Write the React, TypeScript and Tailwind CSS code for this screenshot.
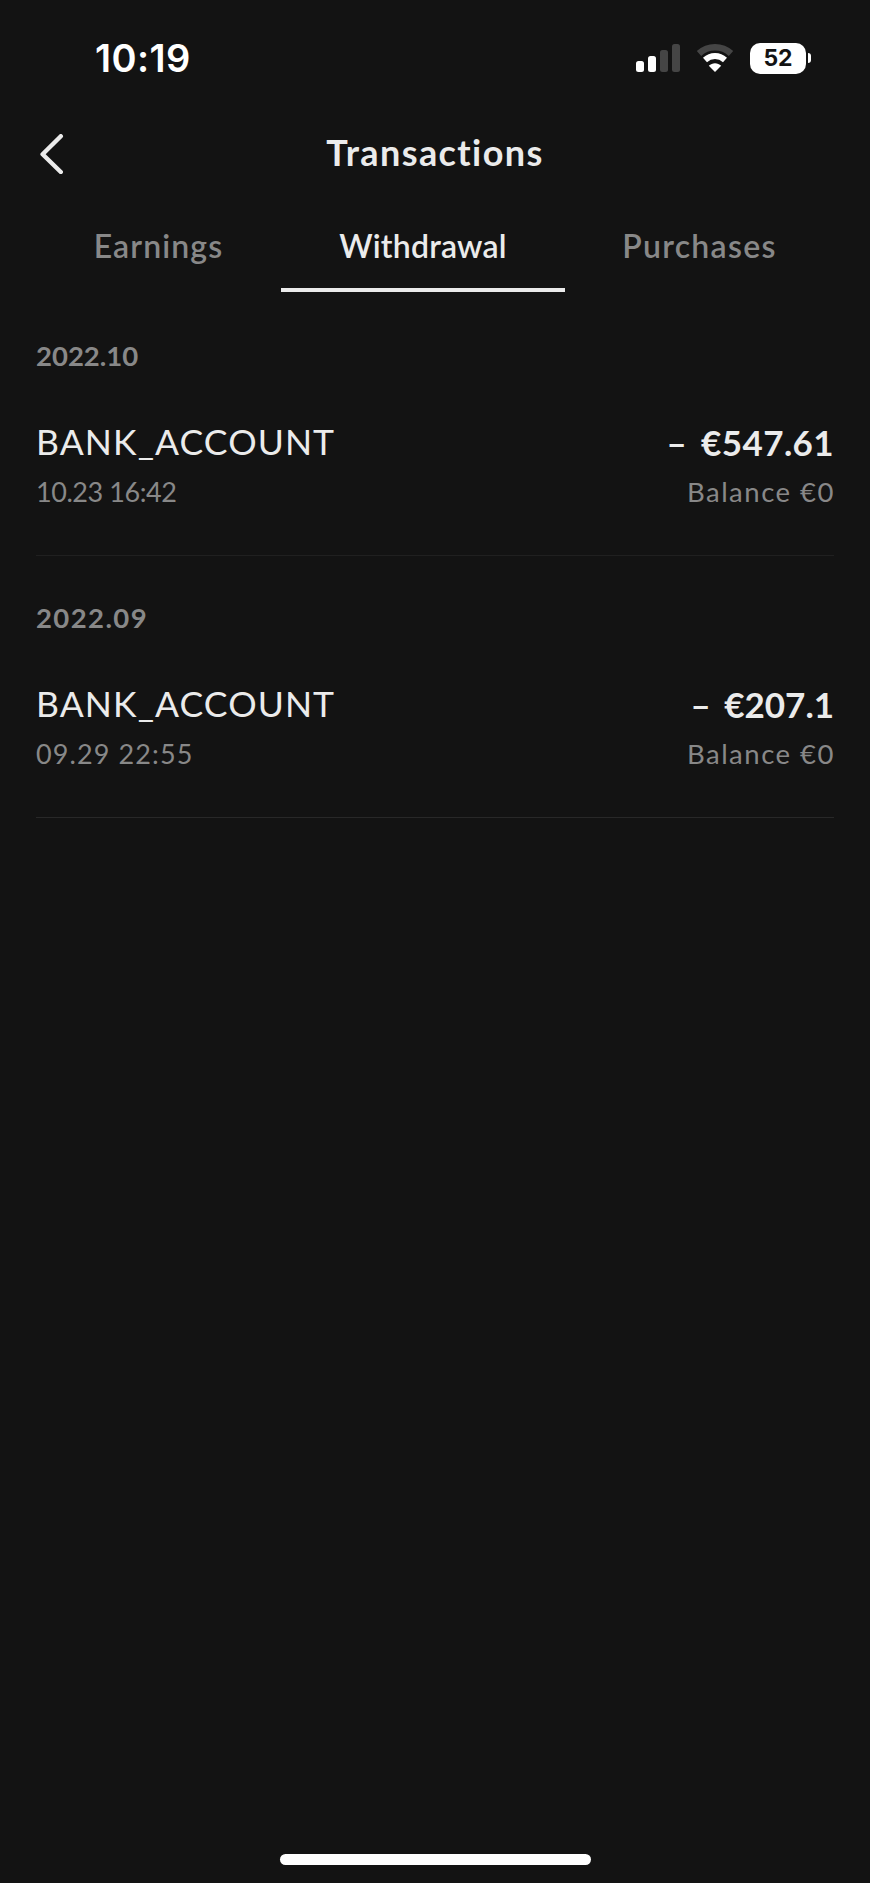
const tabs = [
    { id: 'earnings', label: 'Earnings', width: 'w-[245px]', tracking: 'tracking-[1.1px]' },
    { id: 'withdrawal', label: 'Withdrawal', width: 'w-[284px]', tracking: 'tracking-[0.2px]' },
    { id: 'purchases', label: 'Purchases', width: 'w-[269px]', tracking: 'tracking-[1.3px]' },
]

const transactions = [
    {
        id: 1,
        month: '2022.10',
        monthTracking: 'tracking-normal',
        title: 'BANK_ACCOUNT',
        date: '10.23 16:42',
        dateTracking: 'tracking-[-0.45px]',
        amount: '€547.61',
        amountTracking: 'tracking-[0.4px]',
        balance: '€0',
    },
    {
        id: 2,
        month: '2022.09',
        monthTracking: 'tracking-[1.4px]',
        title: 'BANK_ACCOUNT',
        date: '09.29 22:55',
        dateTracking: 'tracking-[1.1px]',
        amount: '€207.1',
        amountTracking: 'tracking-normal',
        balance: '€0',
    },
]

function StatusBar() {
    return (
        <div className="flex h-[116px] items-center justify-between pl-[95px] pr-[59px] font-['Inter',sans-serif]">
            <span className="text-[38px] font-semibold leading-none tracking-[0.4px] text-white">10:19</span>
            <div className="flex items-center">
                {/* Signal */}
                <svg width="44" height="28" viewBox="0 0 44 28" className="mr-4">
                    <rect x="0" y="17" width="8" height="11" rx="2.5" fill="#fff" />
                    <rect x="12" y="12" width="8" height="16" rx="2.5" fill="#fff" />
                    <rect x="24" y="6" width="8" height="22" rx="2.5" fill="#454545" />
                    <rect x="36" y="0" width="8" height="28" rx="2.5" fill="#454545" />
                </svg>
                {/* Wifi */}
                <svg width="38" height="28" viewBox="0 0 38 28" className="mr-4">
                    <path d="M3 9.5C12 1.2 26 1.2 35 9.5" fill="none" stroke="#454545" strokeWidth="6.5" />
                    <path d="M9 16C14.8 10.8 23.2 10.8 29 16" fill="none" stroke="#fff" strokeWidth="6" />
                    <path d="M12.8 21.8C16.3 18.4 21.7 18.4 25.2 21.8L19 28Z" fill="#fff" />
                </svg>
                {/* Battery */}
                <div className="flex h-[31px] w-14 items-center justify-center rounded-[10px] bg-white pt-px text-[23px] font-bold leading-none text-[#131313]">
                    52
                </div>
                <div className="ml-0.5 h-2.5 w-[3px] rounded-r-full bg-white"></div>
            </div>
        </div>
    )
}

function Header() {
    return (
        <div className="grid h-[74px] grid-cols-[1fr_auto_1fr] items-center pl-[38px] pr-[38px]">
            <svg width="26" height="40" viewBox="0 0 26 40" fill="none" className="mt-[2px]">
                <path d="M22.8 2.2L4.6 20.2L22.8 38" stroke="#ebebeb" strokeWidth="4.4" strokeLinecap="round" strokeLinejoin="round" />
            </svg>
            <h1 className="pb-[2px] text-[36px] font-bold leading-[42px] tracking-[1.4px] text-[#ebebeb]">Transactions</h1>
        </div>
    )
}

export default function App() {
    const activeTab = 'withdrawal'

    return (
        <div className="flex h-[1883px] w-[870px] flex-col bg-[#131313] font-['Lato',sans-serif]">
            <StatusBar />
            <Header />

            <div className="flex h-[104px] px-9">
                {tabs.map(tab => (
                    <div key={tab.id} className={`flex flex-col items-center pt-9 ${tab.width}`}>
                        <span className={`text-[32px] font-semibold leading-[40px] ${tab.tracking} ${tab.id === activeTab ? 'text-[#ebebeb]' : 'text-[#888888]'}`}>
                            {tab.label}
                        </span>
                        {tab.id === activeTab && <div className="mt-[22px] h-[4px] w-full bg-[#ebebeb]"></div>}
                    </div>
                ))}
            </div>

            <div className="flex flex-col px-9">
                {transactions.map(item => (
                    <div key={item.id} className="h-[262px] border-b border-[#202020] pt-11 last:border-[#282828]">
                        <h2 className={`text-[27.5px] font-bold leading-9 text-[#888888] ${item.monthTracking}`}>{item.month}</h2>
                        <div className="mt-[47px] flex items-center justify-between leading-[42px] text-[#ebebeb]">
                            <span className="text-[35.5px] tracking-[1.1px]">{item.title}</span>
                            <span className={`text-[35px] font-bold [word-spacing:5px] ${item.amountTracking}`}>– {item.amount}</span>
                        </div>
                        <div className="mt-[13px] flex items-center justify-between text-[27px] leading-8 text-[#888888]">
                            <span className={item.dateTracking}>{item.date}</span>
                            <span className="-mr-[1px] text-[27.5px] tracking-[1.5px]">Balance {item.balance}</span>
                        </div>
                    </div>
                ))}
            </div>

            {/* Home indicator */}
            <div className="mb-[18px] mt-auto h-[11px] w-[311px] self-center rounded-full bg-white"></div>
        </div>
    )
}
